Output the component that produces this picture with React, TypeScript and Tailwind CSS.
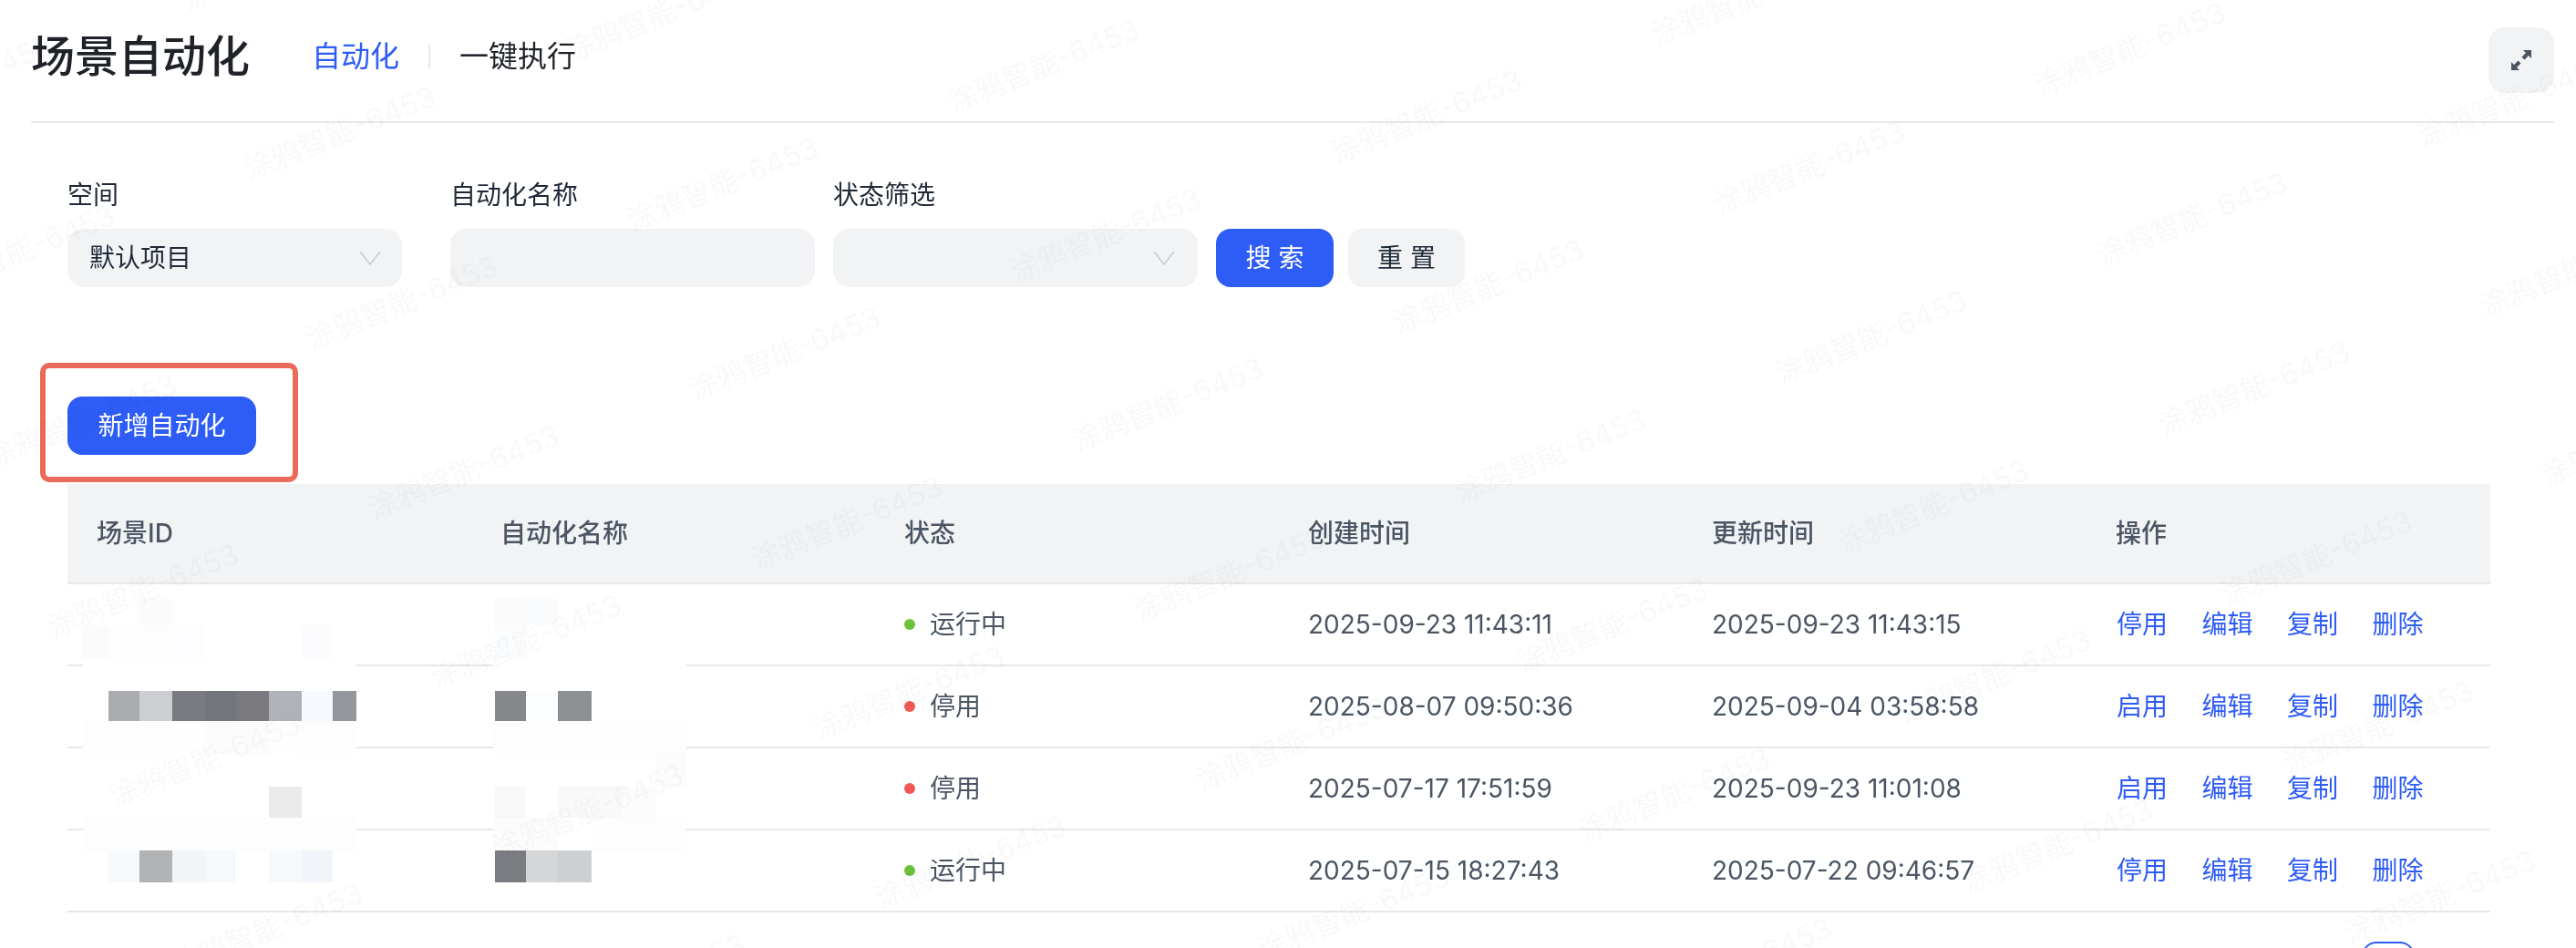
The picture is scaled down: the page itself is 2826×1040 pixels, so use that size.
import React from "react";

const wm: { x: number; y: number }[] = [];
for (let i = -6; i <= 6; i++) {
  for (let j = -3; j <= 7; j++) {
    const x = 1145 + 420 * i + 68 * j;
    const y = 72 + 56 * i + 186 * j;
    if (x > -150 && x < 2980 && y > -100 && y < 1140) wm.push({ x, y });
  }
}

const W = "#ffffff";
const col1X = [91, 119, 153, 189, 225, 259, 295, 331, 365, 391];
const col1Y = [657, 686, 722, 758, 791, 827, 863, 897, 933, 968];
const col1: string[][] = [
  [W, W, "#fbfbfb", W, W, W, W, W, W],
  ["#fbfbfb", "#fdfdfd", "#fdfdfd", "#fdfdff", W, W, W, "#fcfcfe", W],
  [W, W, W, W, W, W, W, W, W],
  [W, "#a9abae", "#cdced2", "#7a7b80", "#72757c", "#7a7a7e", "#afb2b8", "#f6faff", "#94989c"],
  ["#fdfdfd", "#fdfdfd", "#fdfdfd", "#fefefe", "#fcfcfc", "#fcfcfc", "#fefefe", "#fdfdfd", "#fdfdfd"],
  [W, W, W, W, W, W, W, W, W],
  [W, W, W, W, W, W, "#ebebeb", W, W],
  ["#fdfdfd", "#fdfdfd", "#fdfdfd", "#fdfdfd", "#fdfdfd", "#fdfdfd", "#fdfdfd", "#fdfdfd", "#fdfdfd"],
  [W, "#f7fafd", "#b1b3b5", "#f2f5f8", "#f6f9fc", W, "#f7fafd", "#f1f4f9", W],
];
const col2X = [541, 543, 577, 612, 649, 682, 719, 753];
const col2: string[][] = [
  [W, "#fafafa", "#fafbfd", W, W, W, W],
  [W, "#fafcfe", W, W, W, W, W],
  [W, W, W, W, W, W, W],
  [W, "#85878a", "#fbfdff", "#8e9194", W, W, W],
  ["#fdfdfd", "#fdfdfd", "#fdfdfd", "#fdfdfd", "#fdfdfd", "#fdfdfd", "#fdfdfd"],
  [W, W, W, W, W, W, "#fcfcfc"],
  [W, "#f8f8f8", W, "#f9f9f9", "#f9f9f9", "#fcfcfc", W],
  ["#fcfcfc", "#fcfcfc", "#fcfcfc", W, "#fdfdfd", "#fdfdfd", "#fdfdfd"],
  [W, "#7a7c81", "#d5d6d8", "#cdd0d3", W, W, W],
];

function Mosaic({ xs, ys, cells, className }: { xs: number[]; ys: number[]; cells: string[][]; className: string }) {
  return (
    <div className={className}>
      {cells.map((row, r) => (
        <div key={r} className="flex" style={{ height: ys[r + 1] - ys[r] }}>
          {row.map((c, i) => (
            <div key={i} style={{ width: xs[i + 1] - xs[i], background: c }} />
          ))}
        </div>
      ))}
    </div>
  );
}

function Chevron() {
  return (
    <svg width="24" height="16" viewBox="0 0 24 16" fill="none" className="shrink-0">
      <path d="M1 1 L12 15 L23 1" stroke="#c9cdd4" strokeWidth="1.6" />
    </svg>
  );
}

const rows = [
  { on: true, created: "2025-09-23 11:43:11", updated: "2025-09-23 11:43:15" },
  { on: false, created: "2025-08-07 09:50:36", updated: "2025-09-04 03:58:58" },
  { on: false, created: "2025-07-17 17:51:59", updated: "2025-09-23 11:01:08" },
  { on: true, created: "2025-07-15 18:27:43", updated: "2025-07-22 09:46:57" },
];

const headers = ["场景ID", "自动化名称", "状态", "创建时间", "更新时间", "操作"];

export default function App() {
  return (
    <div className="relative h-screen w-full overflow-hidden bg-white pl-[34px] pr-[24px] text-[28px] font-[Inter,'Noto_Sans_CJK_SC',sans-serif] text-[#1f2937]">
      <header className="flex h-[135px] items-start border-b-2 border-[#e8e8e8] pt-[30px]">
        <div className="flex h-[64px] items-center">
          <h1 className="w-[240px] text-[48px] font-medium leading-none text-[#1f2329]">场景自动化</h1>
          <span className="ml-[68px] text-[32px] text-[#2d5cf6]">自动化</span>
          <span className="mx-[32px] h-[26px] w-[2px] bg-[#e8e8e8]" />
          <span className="text-[32px] text-[#1f2329]">一键执行</span>
        </div>
        <button className="ml-auto flex h-[72px] w-[72px] items-center justify-center rounded-[18px] bg-[#f2f3f5]">
          <svg width="22" height="22" viewBox="0 0 22 22" fill="#4b5563">
            <path d="M13 0 H22 V9 L19 6 L14.5 10.5 L11.5 7.5 L16 3 Z" />
            <path d="M0 13 V22 H9 L6 19 L10.5 14.5 L7.5 11.5 L3 16 Z" />
          </svg>
        </button>
      </header>

      <main className="pl-[40px]">
        <section className="flex items-end pt-[59px]">
          <div className="w-[367px]">
            <label className="mb-[17px] block h-[40px] leading-[40px]">空间</label>
            <div className="flex h-[64px] items-center justify-between rounded-[18px] bg-[#f2f3f5] pl-[24px] pr-[23px]">
              <span>默认项目</span>
              <Chevron />
            </div>
          </div>
          <div className="ml-[53px] w-[400px]">
            <label className="mb-[17px] block h-[40px] leading-[40px]">自动化名称</label>
            <div className="h-[64px] rounded-[18px] bg-[#f2f3f5]" />
          </div>
          <div className="ml-[20px] w-[400px]">
            <label className="mb-[17px] block h-[40px] leading-[40px]">状态筛选</label>
            <div className="flex h-[64px] items-center justify-end rounded-[18px] bg-[#f2f3f5] pr-[25px]">
              <Chevron />
            </div>
          </div>
          <button className="ml-[20px] h-[64px] w-[129px] rounded-[16px] bg-[#2d5cf6] text-white">搜 索</button>
          <button className="ml-[16px] h-[64px] w-[128px] rounded-[16px] bg-[#f2f3f5]">重 置</button>
        </section>

        <div className="relative mt-[120px] w-[207px]">
          <button className="h-[64px] w-[207px] rounded-[16px] bg-[#2d5cf6] text-white">新增自动化</button>
          <div className="pointer-events-none absolute left-[-30px] top-[-37px] h-[131px] w-[283px] rounded-[10px] border-[6px] border-[#ec6a5a]" />
        </div>

        <div className="relative mt-[32px] w-[2658px]">
          <div className="grid h-[110px] grid-cols-6 items-center border-b-2 border-[#e8e8e8] bg-[#f2f3f5] font-medium text-[#4b5563]">
            {headers.map((h) => (
              <div key={h} className="px-[32px]">{h}</div>
            ))}
          </div>
          {rows.map((r) => (
            <div key={r.created} className="grid h-[90px] grid-cols-6 items-center border-b-2 border-[#e8e8e8] text-[#4b5563]">
              <div />
              <div />
              <div className="flex items-center gap-[16px] px-[32px]">
                <span className={r.on ? "h-[12px] w-[12px] rounded-full bg-[#6cc13a]" : "h-[12px] w-[12px] rounded-full bg-[#ef5855]"} />
                <span>{r.on ? "运行中" : "停用"}</span>
              </div>
              <div className="px-[32px]">{r.created}</div>
              <div className="px-[32px]">{r.updated}</div>
              <div className="flex gap-[37.5px] whitespace-nowrap pl-[33px] text-[#2d5cf6]">
                <a>{r.on ? "停用" : "启用"}</a>
                <a>编辑</a>
                <a>复制</a>
                <a>删除</a>
              </div>
            </div>
          ))}
          <Mosaic xs={col1X} ys={col1Y} cells={col1} className="absolute left-[17px] top-[126px]" />
          <Mosaic xs={col2X} ys={col1Y} cells={col2} className="absolute left-[467px] top-[126px]" />
        </div>

        <div className="mt-[32px] flex w-[2658px] justify-end pr-[83px]">
          <button className="h-[64px] w-[58px] rounded-[16px] border-2 border-[#2d5cf6] text-[#2d5cf6]">1</button>
        </div>
      </main>

      <div className="pointer-events-none absolute inset-0 overflow-hidden">
        {wm.map((p) => (
          <span
            key={`${p.x}-${p.y}`}
            className="absolute -translate-x-1/2 -translate-y-1/2 -rotate-[22deg] whitespace-nowrap text-[32px] text-[#f9f9f9] mix-blend-multiply"
            style={{ left: p.x, top: p.y }}
          >
            涂鸦智能-6453
          </span>
        ))}
      </div>
    </div>
  );
}
